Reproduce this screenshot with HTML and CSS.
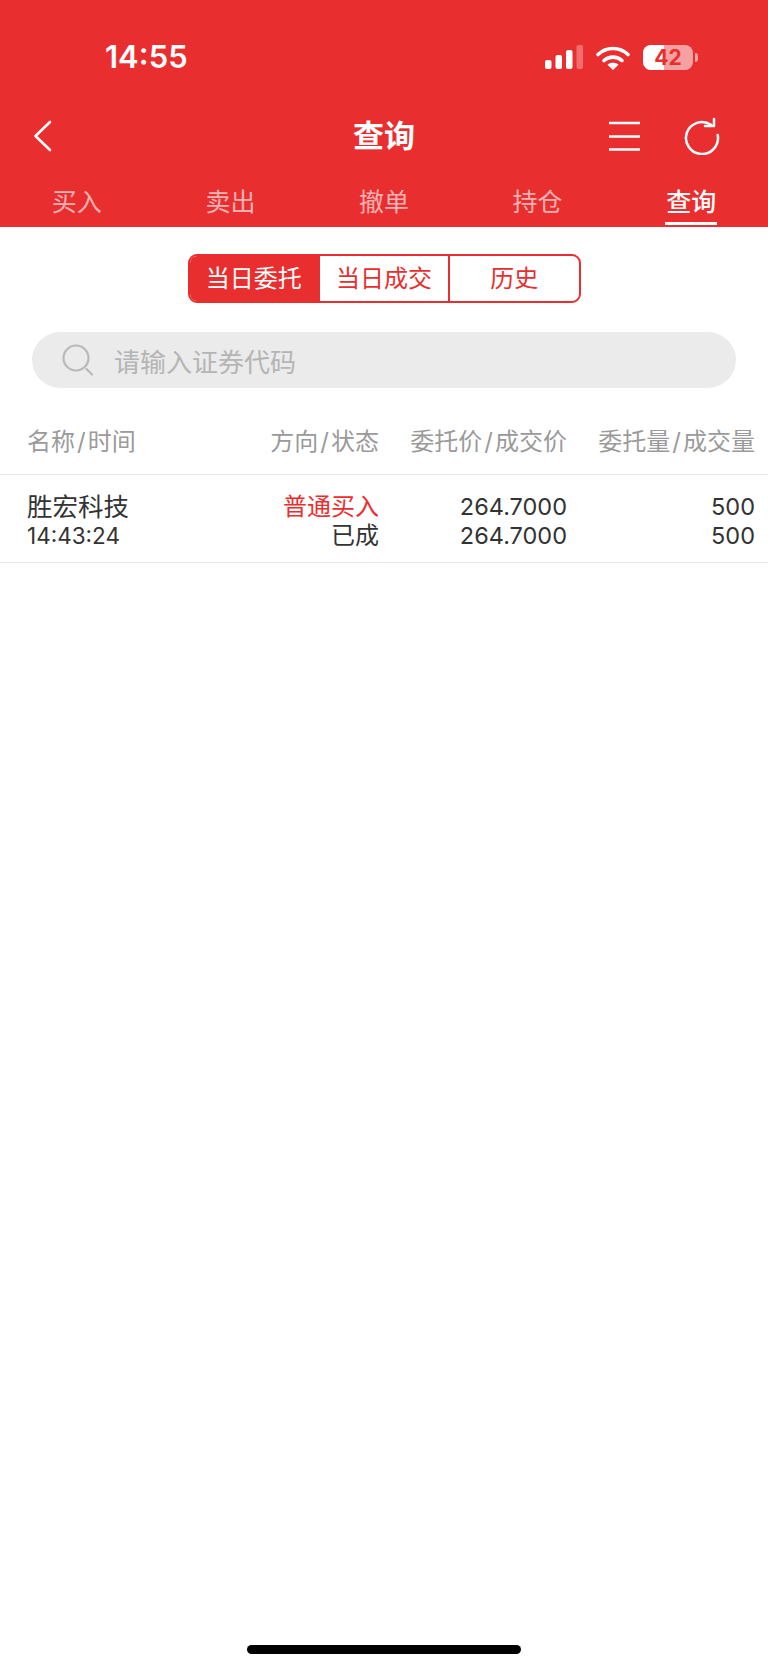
FILE: index.html
```html
<!DOCTYPE html>
<html lang="zh-CN">
<head>
<meta charset="utf-8">
<title>查询</title>
<link rel="stylesheet" href="styles.css">
</head>
<body>
<div class="page">
  <header class="top">
    <div class="status">
      <span class="clock">14:55</span>
      <div class="status-icons">
        <svg class="signal" width="38" height="24" viewBox="0 0 38 24">
          <rect x="0" y="15" width="6.5" height="9" rx="2" fill="#fff"/>
          <rect x="10.5" y="10" width="6.5" height="14" rx="2" fill="#fff"/>
          <rect x="21" y="5" width="6.5" height="19" rx="2" fill="#fff"/>
          <rect x="31.5" y="0" width="6.5" height="24" rx="2" fill="#fff" fill-opacity=".3"/>
        </svg>
        <svg class="wifi" width="34" height="25" viewBox="0 0 34 25">
          <path d="M2 9.5C10.500 1.500 23.500 1.500 32 9.500" fill="none" stroke="#fff" stroke-width="3.600" stroke-linecap="round"/>
          <path d="M8 15.500C13 11 21 11 26 15.500" fill="none" stroke="#fff" stroke-width="3.600" stroke-linecap="round"/>
          <path d="M17 25L11.500 19.800C14.500 17.200 19.500 17.200 22.500 19.800Z" fill="#fff"/>
        </svg>
        <div class="battery">
          <div class="battery-case">
            <span class="battery-level"></span>
            <span class="battery-text">42</span>
          </div>
          <span class="battery-nub"></span>
        </div>
      </div>
    </div>
    <div class="nav">
      <svg class="nav-back" width="24" height="34" viewBox="0 0 24 34">
        <path d="M20 3L5.500 17L20 31" fill="none" stroke="#fff" stroke-width="2.600" stroke-linecap="round" stroke-linejoin="round"/>
      </svg>
      <h1 class="nav-title">查询</h1>
      <div class="nav-actions">
        <svg width="32" height="30" viewBox="0 0 32 30">
          <path d="M1 2H32M1 15.500H32M1 28.500H32" fill="none" stroke="#fff" stroke-width="2.600"/>
        </svg>
        <svg width="38" height="38" viewBox="0 -1 38 38">
          <path d="M28 6.800A16 16 0 1 0 34.700 17" fill="none" stroke="#fff" stroke-width="2.500" stroke-linecap="round"/>
          <path d="M22 8H31V1" fill="none" stroke="#fff" stroke-width="2.500" stroke-linecap="round" stroke-linejoin="round"/>
        </svg>
      </div>
    </div>
    <nav class="tabs">
      <a class="tab">买入</a>
      <a class="tab">卖出</a>
      <a class="tab">撤单</a>
      <a class="tab">持仓</a>
      <a class="tab tab-on">查询</a>
    </nav>
  </header>

  <div class="segments">
    <a class="segment segment-on">当日委托</a>
    <a class="segment">当日成交</a>
    <a class="segment">历史</a>
  </div>

  <div class="search">
    <svg width="32" height="32" viewBox="0 0 32 32">
      <circle cx="14" cy="14" r="12.500" fill="none" stroke="#b9b9b9" stroke-width="2.200"/>
      <path d="M24.500 25L30 30.500" fill="none" stroke="#b9b9b9" stroke-width="2.200" stroke-linecap="round"/>
    </svg>
    <span class="search-hint">请输入证券代码</span>
  </div>

  <div class="grid grid-head">
    <span class="cell-left">名称<i class="sep">/</i>时间</span>
    <span>方向<i class="sep">/</i>状态</span>
    <span>委托价<i class="sep">/</i>成交价</span>
    <span>委托量<i class="sep">/</i>成交量</span>
  </div>

  <div class="grid grid-row">
    <div class="cell-left">
      <div class="stock-name">胜宏科技</div>
      <div class="stock-time">14:43:24</div>
    </div>
    <div>
      <div class="buy">普通买入</div>
      <div>已成</div>
    </div>
    <div class="num">
      <div>264.7000</div>
      <div>264.7000</div>
    </div>
    <div class="num">
      <div>500</div>
      <div>500</div>
    </div>
  </div>

  <div class="home-bar"></div>
</div>
</body>
</html>
```

FILE: styles.css
```css
* {
  box-sizing: border-box;
}

html,
body {
  margin: 0;
  padding: 0;
  background: #fff;
}

body {
  font-family: Inter, "Noto Sans CJK SC", sans-serif;
}

.page {
  display: flex;
  flex-direction: column;
  height: 1669px;
  overflow: hidden;
}

/* Red header: status bar, title row, tabs */
.top {
  height: 227px;
  background: #e92e2f;
  color: #fff;
}

.status {
  display: flex;
  align-items: center;
  justify-content: space-between;
  height: 34px;
  margin-top: 40px;
  padding: 0 70px 0 105px;
}

.clock {
  font-size: 31px;
  font-weight: 600;
  line-height: 34px;
}

.status-icons {
  display: flex;
  align-items: center;
}

.wifi {
  margin-left: 13px;
}

.battery {
  display: flex;
  align-items: center;
  margin-left: 13px;
}

.battery-case {
  position: relative;
  width: 50px;
  height: 25px;
  border-radius: 8px;
  overflow: hidden;
  background: rgba(255, 255, 255, .55);
}

.battery-level {
  position: absolute;
  left: 0;
  top: 0;
  bottom: 0;
  width: 21px;
  background: #fff;
}

.battery-text {
  position: absolute;
  inset: 0;
  text-align: center;
  font-size: 21px;
  font-weight: 700;
  line-height: 25px;
  color: #e92e2f;
}

.battery-nub {
  width: 3px;
  height: 9px;
  margin-left: 2px;
  border-radius: 0 3px 3px 0;
  background: rgba(255, 255, 255, .55);
}

.nav {
  position: relative;
  display: flex;
  align-items: center;
  justify-content: space-between;
  height: 44px;
  margin-top: 40px;
  padding: 0 47px 0 30px;
}

.nav-title {
  position: absolute;
  left: 0;
  right: 0;
  margin: 0;
  text-align: center;
  font-size: 31px;
  font-weight: 600;
  line-height: 44px;
}

.nav-actions {
  display: flex;
  align-items: center;
  gap: 43px;
}

.tabs {
  display: grid;
  grid-template-columns: repeat(5, 1fr);
  margin-top: 23px;
}

.tab {
  justify-self: center;
  height: 44px;
  padding: 0 1px;
  font-size: 25px;
  line-height: 42px;
  color: rgba(255, 255, 255, .65);
  border-bottom: 3px solid transparent;
}

.tab-on {
  color: #fff;
  font-weight: 500;
  border-bottom-color: #fff;
}

/* Order range switch */
.segments {
  display: flex;
  align-self: center;
  width: 393px;
  height: 49px;
  margin-top: 27px;
  border: 2px solid #e92e2f;
  border-radius: 9px;
  overflow: hidden;
}

.segment {
  flex: 1;
  text-align: center;
  font-size: 24px;
  line-height: 46px;
  color: #e92e2f;
}

.segment + .segment {
  border-left: 2px solid #e92e2f;
}

.segment-on {
  background: #e92e2f;
  color: #fff;
}

/* Search field */
.search {
  display: flex;
  align-items: center;
  gap: 20px;
  height: 56px;
  margin: 29px 32px 0;
  padding: 0 30px;
  border-radius: 28px;
  background: #ebebeb;
}

.search-hint {
  font-size: 26px;
  color: #b5b5b5;
}

/* Order table */
.grid {
  display: grid;
  grid-template-columns: 1fr 187px 188px 188px;
  padding: 0 13px 0 27px;
  text-align: right;
  border-bottom: 1.500px solid #e8e8e8;
}

.cell-left {
  text-align: left;
}

.grid-head {
  align-items: center;
  height: 87px;
  padding-top: 17px;
  font-size: 24px;
  color: #9a9a9a;
}

.sep {
  margin: 0 2px;
  font-style: normal;
}

.grid-row {
  height: 87.500px;
  padding-top: 17px;
  font-size: 24px;
  line-height: 29px;
  color: #333;
}

.num {
  font-size: 23.500px;
}

.stock-name {
  font-size: 25.500px;
}

.stock-time {
  font-size: 22.500px;
}

.buy {
  color: #e92e2f;
}

.home-bar {
  flex: none;
  align-self: center;
  width: 274px;
  height: 9px;
  margin-top: auto;
  margin-bottom: 15px;
  border-radius: 5px;
  background: #000;
}
```
